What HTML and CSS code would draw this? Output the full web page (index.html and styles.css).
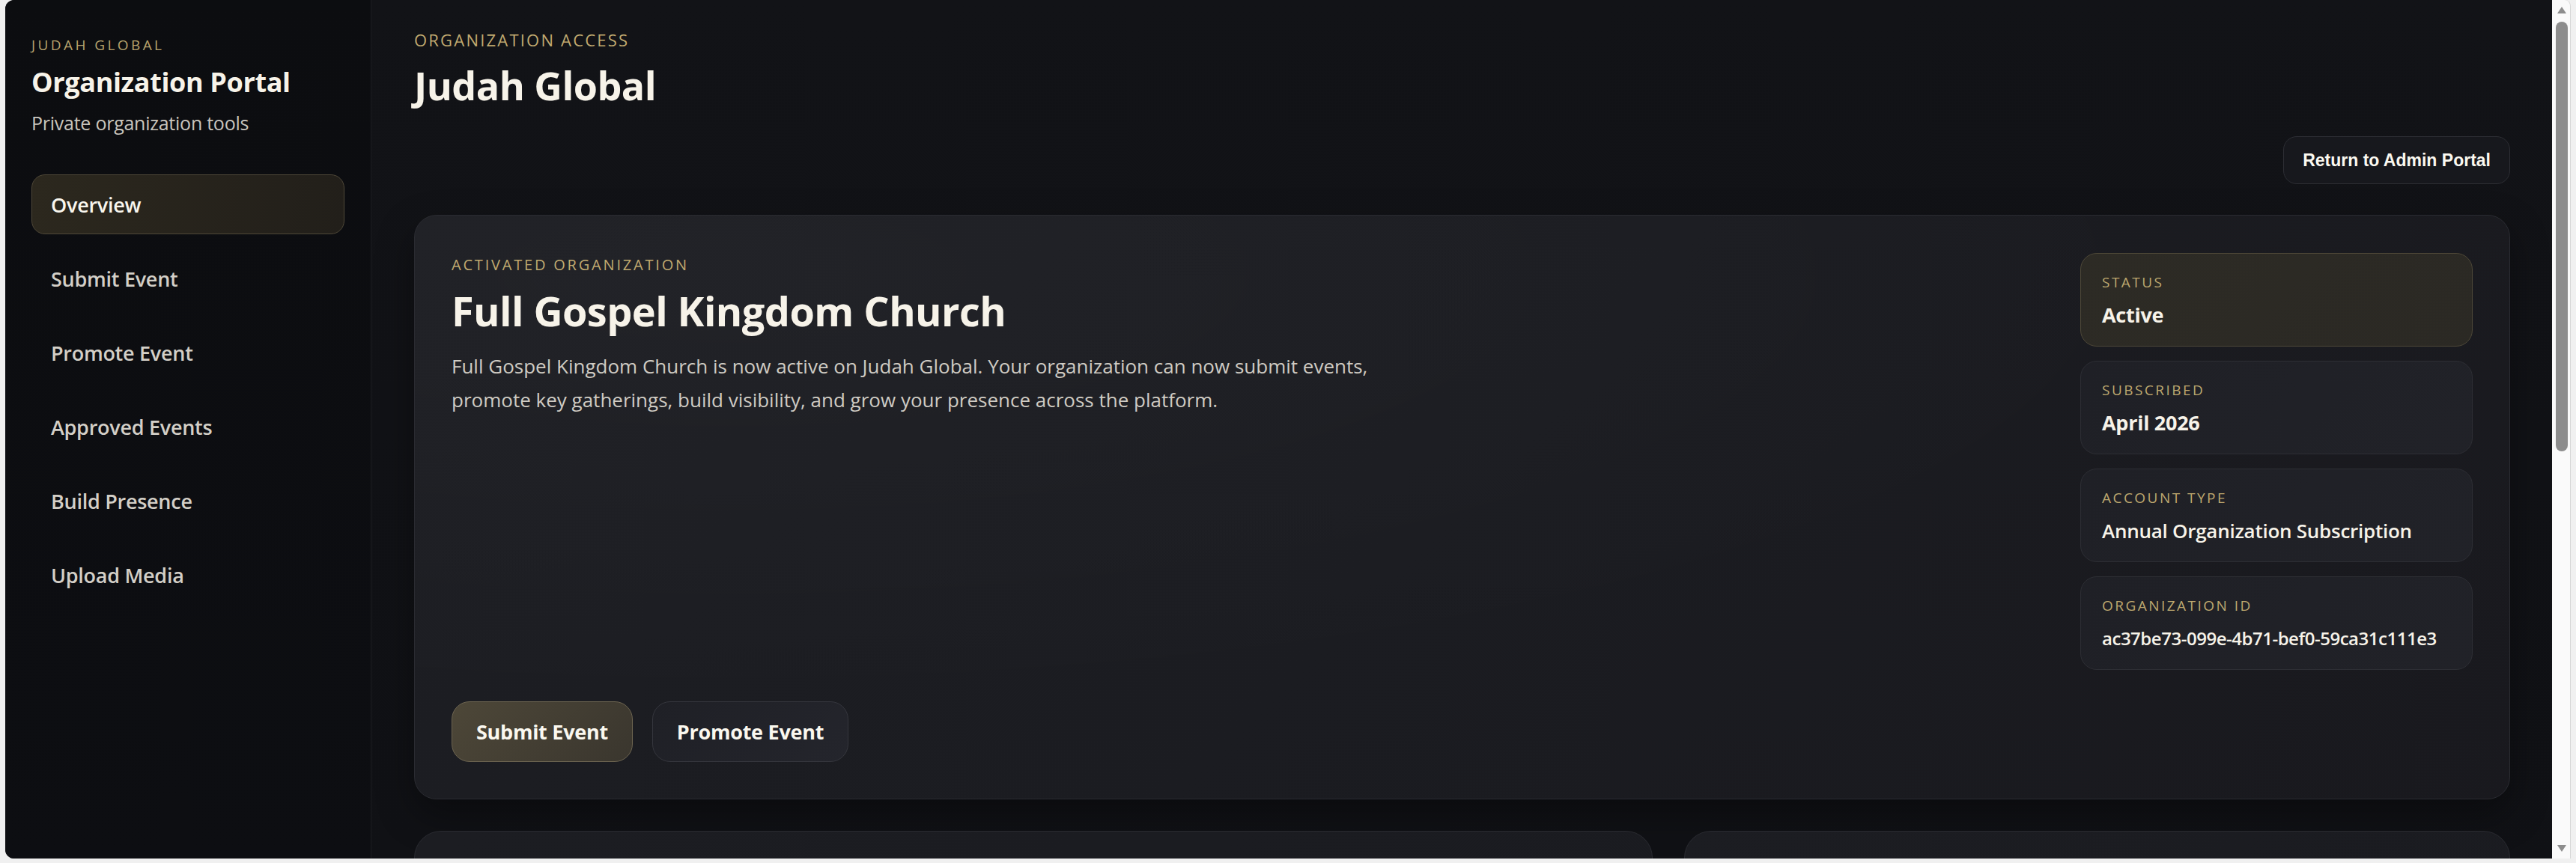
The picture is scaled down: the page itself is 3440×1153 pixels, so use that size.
FILE: index.html
```html
<!DOCTYPE html>
<html lang="en">
<head>
  <meta charset="UTF-8">
  <meta name="viewport" content="width=device-width, initial-scale=1.0">
  <title>Organization Portal - Judah Global</title>
  <link rel="stylesheet" href="styles.css">
</head>
<body>
  <div class="frame">
    <div class="app">
      <aside class="sidebar">
        <div class="brand-kicker">JUDAH GLOBAL</div>
        <div class="brand-title">Organization Portal</div>
        <div class="brand-sub">Private organization tools</div>

        <nav class="nav">
          <a class="nav-item active" href="#">Overview</a>
          <a class="nav-item" href="#">Submit Event</a>
          <a class="nav-item" href="#">Promote Event</a>
          <a class="nav-item" href="#">Approved Events</a>
          <a class="nav-item" href="#">Build Presence</a>
          <a class="nav-item" href="#">Upload Media</a>
        </nav>
      </aside>

      <main class="main">
        <header class="page-head">
          <div class="kicker">ORGANIZATION ACCESS</div>
          <h1>Judah Global</h1>
        </header>

        <div class="head-actions">
          <button class="btn-return">Return to Admin Portal</button>
        </div>

        <section class="hero-card">
          <div class="hero-body">
            <div>
              <div class="kicker hero-kicker">ACTIVATED ORGANIZATION</div>
              <h2>Full Gospel Kingdom Church</h2>
              <p class="hero-text">Full Gospel Kingdom Church is now active on Judah Global. Your organization can now submit events, promote key gatherings, build visibility, and grow your presence across the platform.</p>
            </div>
            <div class="hero-actions">
              <button class="btn btn-gold">Submit Event</button>
              <button class="btn btn-dark">Promote Event</button>
            </div>
          </div>

          <div class="info-list">
            <div class="info-card status">
              <div class="info-label">STATUS</div>
              <div class="info-value">Active</div>
            </div>
            <div class="info-card">
              <div class="info-label">SUBSCRIBED</div>
              <div class="info-value">April 2026</div>
            </div>
            <div class="info-card">
              <div class="info-label">ACCOUNT TYPE</div>
              <div class="info-value">Annual Organization Subscription</div>
            </div>
            <div class="info-card">
              <div class="info-label">ORGANIZATION ID</div>
              <div class="info-value info-id">ac37be73-099e-4b71-bef0-59ca31c111e3</div>
            </div>
          </div>
        </section>

        <div class="lower-grid">
          <section class="panel"></section>
          <section class="panel"></section>
        </div>
      </main>
    </div>

    <div class="scrollbar">
      <span class="arrow up"></span>
      <span class="thumb"></span>
      <span class="arrow down"></span>
    </div>
  </div>
</body>
</html>
```

FILE: styles.css
```css
* {
  box-sizing: border-box;
}
html, body {
  margin: 0;
  height: 100%;
  overflow: hidden;
}
body {
  font-family: "Open Sans", "Noto Sans", sans-serif;
  background-color: #f0f0f0;
  color: #f7f3e9;
}
.frame {
  display: flex;
  height: 1153px;
  padding: 0 7px 6px 7px;
}
.app {
  flex: 1;
  display: grid;
  grid-template-columns: 489px 1fr;
  min-width: 0;
  border-radius: 12px 0 0 12px;
  overflow: hidden;
  background: linear-gradient(180deg, #121317 0%, #101115 100%);
}

/* sidebar */
.sidebar {
  background: linear-gradient(180deg, #0c0d10 0%, #0d0e12 100%);
  border-right: 1px solid #1c1d21;
  padding: 49px 35px 0 35px;
}
.brand-kicker {
  font-size: 19px;
  line-height: 23px;
  letter-spacing: 0.18em;
  color: #b7a26c;
}
.brand-title {
  margin-top: 15px;
  font-size: 36px;
  line-height: 46px;
  font-weight: 700;
  letter-spacing: -0.01em;
}
.brand-sub {
  margin-top: 14px;
  font-size: 25px;
  line-height: 35px;
  color: #c9c5bd;
  letter-spacing: -0.01em;
}
.nav {
  display: flex;
  flex-direction: column;
  gap: 19px;
  margin-top: 51px;
}
.nav-item {
  display: flex;
  align-items: center;
  height: 80px;
  padding: 0 25px;
  border: 1px solid transparent;
  border-radius: 18px;
  font-size: 27px;
  font-weight: 600;
  color: #d3cfc7;
  text-decoration: none;
  letter-spacing: -0.01em;
}
.nav-item.active {
  color: #f9f6ee;
  background: linear-gradient(100deg, #2c281e 0%, #221f1a 100%);
  border-color: #4f4838;
}

/* main */
.main {
  padding: 39px 56px 0 57px;
  overflow: hidden;
  min-width: 0;
}
.kicker {
  font-size: 22px;
  line-height: 28px;
  letter-spacing: 0.1em;
  color: #c1aa70;
}
.page-head h1 {
  margin: 16px 0 0;
  font-size: 52px;
  line-height: 62px;
  font-weight: 700;
  letter-spacing: -0.01em;
}
.head-actions {
  display: flex;
  justify-content: flex-end;
  margin-top: 37px;
}
.btn-return {
  height: 64px;
  padding: 0 25px;
  font-family: "Liberation Sans", Arial, sans-serif;
  font-size: 23px;
  font-weight: 700;
  color: #fbf8f0;
  background-color: #17181d;
  border: 1px solid #2d2e34;
  border-radius: 18px;
  cursor: pointer;
}

.hero-card {
  display: flex;
  gap: 40px;
  min-height: 781px;
  margin-top: 41px;
  padding: 50px 49px 49px 49px;
  border: 1px solid #2a2b31;
  border-radius: 30px;
  background:
    radial-gradient(ellipse at 15% 10%, rgba(255,255,255,0.025), transparent 60%),
    linear-gradient(135deg, #1d1e23 0%, #1b1c21 50%, #19191e 100%);
  box-shadow: 0 20px 50px rgba(0,0,0,0.35);
}
.hero-body {
  flex: 1;
  display: flex;
  flex-direction: column;
  justify-content: space-between;
}
.hero-kicker {
  margin-top: 4px;
  font-size: 20px;
  line-height: 24px;
  letter-spacing: 0.14em;
}
.hero-card h2 {
  margin: 18px 0 0;
  font-size: 54px;
  line-height: 62px;
  font-weight: 700;
  letter-spacing: -0.01em;
}
.hero-text {
  margin: 21px 0 0;
  max-width: 1265px;
  font-size: 26px;
  line-height: 45px;
  color: #cfcbc3;
  letter-spacing: 0;
}
.hero-actions {
  display: flex;
  gap: 26px;
}
.btn {
  height: 81px;
  padding: 0 32px;
  font-family: inherit;
  font-size: 27px;
  font-weight: 700;
  color: #fbf8ef;
  border-radius: 24px;
  cursor: pointer;
  letter-spacing: -0.01em;
}
.btn-gold {
  background: linear-gradient(135deg, #4d4738 0%, #3a362e 100%);
  border: 1px solid #6c6450;
}
.btn-dark {
  background: linear-gradient(135deg, #1f2026 0%, #24252c 100%);
  border: 1px solid #35363d;
}

.info-list {
  width: 524px;
  display: flex;
  flex-direction: column;
  gap: 19px;
}
.info-card {
  padding: 26px 28px 23px;
  border: 1px solid #2d2e34;
  border-radius: 22px;
  background: linear-gradient(135deg, #1f2026 0%, #212228 100%);
}
.info-card.status {
  background: linear-gradient(135deg, #2d2b25 0%, #2b2924 100%);
  border-color: #4e4838;
}
.info-label {
  font-size: 19px;
  line-height: 24px;
  letter-spacing: 0.13em;
  color: #bea86f;
}
.info-value {
  margin-top: 14px;
  font-size: 27px;
  line-height: 36px;
  font-weight: 700;
  letter-spacing: -0.01em;
  white-space: nowrap;
}
.info-card:nth-child(3) .info-value {
  font-size: 26px;
  font-weight: 600;
}
.info-id {
  font-size: 24px;
  font-weight: 600;
  letter-spacing: -0.02em;
}

.lower-grid {
  display: grid;
  grid-template-columns: 1.5fr 1fr;
  gap: 42px;
  margin-top: 42px;
}
.panel {
  height: 420px;
  border: 1px solid #2a2b31;
  border-radius: 36px;
  background: linear-gradient(135deg, #1c1d22 0%, #1a1b20 100%);
}

/* fake window scrollbar */
.scrollbar {
  position: relative;
  width: 25px;
  background-color: #fafafa;
  border-right: 1px solid #d6d6d6;
  border-top-right-radius: 8px;
}
.thumb {
  position: absolute;
  left: 5px;
  top: 29px;
  width: 16px;
  height: 574px;
  border-radius: 8px;
  background-color: #8d8d8d;
}
.arrow {
  position: absolute;
  left: 7px;
  width: 0;
  height: 0;
  border-left: 6px solid transparent;
  border-right: 6px solid transparent;
}
.arrow.up {
  top: 9px;
  border-bottom: 9px solid #8d8d8d;
}
.arrow.down {
  bottom: 9px;
  border-top: 9px solid #8d8d8d;
}
```
